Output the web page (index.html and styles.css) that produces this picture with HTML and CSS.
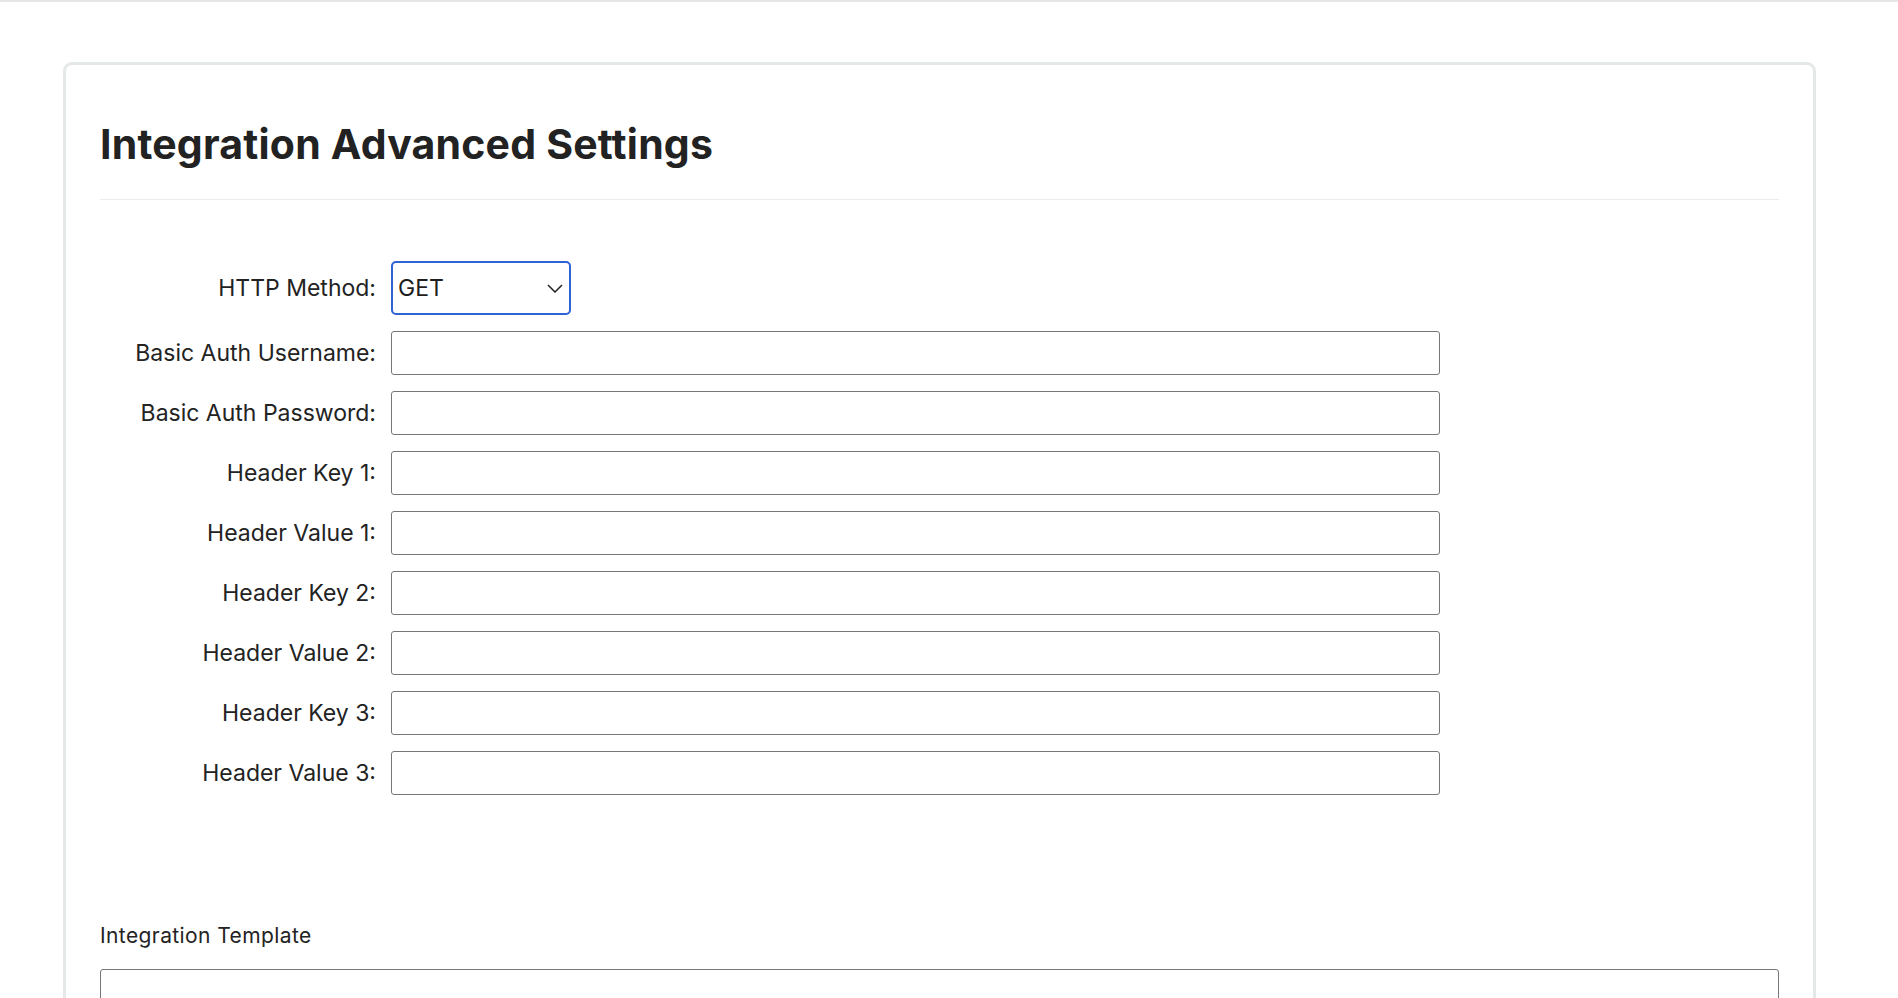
FILE: index.html
```html
<!DOCTYPE html>
<html lang="en">
<head>
<meta charset="utf-8">
<title>Integration Advanced Settings</title>
<link rel="stylesheet" href="styles.css">
</head>
<body>
<div class="topbar"></div>
<main class="card">
  <h1 class="card-title">Integration Advanced Settings</h1>
  <form class="settings">
    <div class="form-grid">
      <label class="field-label" for="method">HTTP Method:</label>
      <div class="select-wrap">
        <select id="method" class="method-select">
          <option>GET</option>
          <option>POST</option>
          <option>PUT</option>
        </select>
        <svg class="chevron" width="16" height="9" viewBox="0 0 16 9" aria-hidden="true"><polyline points="1,1 8,8 15,1" fill="none" stroke="#222" stroke-width="1.5"/></svg>
      </div>

      <label class="field-label" for="user">Basic Auth Username:</label>
      <input id="user" class="text-input" type="text">

      <label class="field-label" for="pass">Basic Auth Password:</label>
      <input id="pass" class="text-input" type="text">

      <label class="field-label" for="hk1">Header Key 1:</label>
      <input id="hk1" class="text-input" type="text">

      <label class="field-label" for="hv1">Header Value 1:</label>
      <input id="hv1" class="text-input" type="text">

      <label class="field-label" for="hk2">Header Key 2:</label>
      <input id="hk2" class="text-input" type="text">

      <label class="field-label" for="hv2">Header Value 2:</label>
      <input id="hv2" class="text-input" type="text">

      <label class="field-label" for="hk3">Header Key 3:</label>
      <input id="hk3" class="text-input" type="text">

      <label class="field-label" for="hv3">Header Value 3:</label>
      <input id="hv3" class="text-input" type="text">
    </div>

    <div class="template-block">
      <label class="template-label" for="tpl">Integration Template</label>
      <textarea id="tpl" class="template-area"></textarea>
    </div>
  </form>
</main>
</body>
</html>
```

FILE: styles.css
```css
html, body {
  margin: 0;
  padding: 0;
  background: #ffffff;
  overflow: hidden;
}

body {
  font-family: "Inter", "Liberation Sans", sans-serif;
  color: #232323;
}

.topbar {
  height: 2px;
  background: #e6e6e6;
}

.card {
  margin: 60px 82px 0 63px;
  border: 3px solid #e4e8e8;
  border-radius: 9px;
  padding: 0 34px 40px;
  min-height: 1000px;
  box-sizing: border-box;
}

.card-title {
  margin: 0;
  padding-top: 54px;
  padding-bottom: 30px;
  font-size: 41px;
  line-height: 50px;
  font-weight: 700;
  letter-spacing: 0.2px;
  color: #222222;
  border-bottom: 1px solid #ececec;
}

.settings {
  margin-top: 61px;
}

.form-grid {
  display: grid;
  grid-template-columns: 276px 1049px;
  column-gap: 15px;
  row-gap: 16px;
  align-items: center;
}

.field-label {
  text-align: right;
  font-size: 23px;
  line-height: 28px;
  color: #232323;
}

.select-wrap {
  position: relative;
  width: 180px;
  height: 54px;
}

.method-select {
  appearance: none;
  -webkit-appearance: none;
  width: 180px;
  height: 54px;
  box-sizing: border-box;
  border: 2px solid #2f62d2;
  border-radius: 5px;
  background: #ffffff;
  padding: 0 0 0 5px;
  font-family: "Inter", "Liberation Sans", sans-serif;
  font-size: 23px;
  color: #1e1e1e;
  outline: none;
}

.chevron {
  position: absolute;
  right: 8px;
  top: 23px;
  pointer-events: none;
}

.text-input {
  box-sizing: border-box;
  width: 1049px;
  height: 44px;
  border: 1px solid #767676;
  border-radius: 3px;
  background: #ffffff;
  padding: 0 6px;
  font-size: 20px;
  font-family: "Inter", "Liberation Sans", sans-serif;
}

.template-block {
  margin-top: 128px;
  display: flex;
  flex-direction: column;
}

.template-label {
  font-size: 21px;
  line-height: 25px;
  letter-spacing: 0.4px;
  color: #232323;
}

.template-area {
  margin-top: 21px;
  box-sizing: border-box;
  width: 100%;
  height: 160px;
  border: 1px solid #767676;
  border-radius: 3px;
  resize: none;
}
```
